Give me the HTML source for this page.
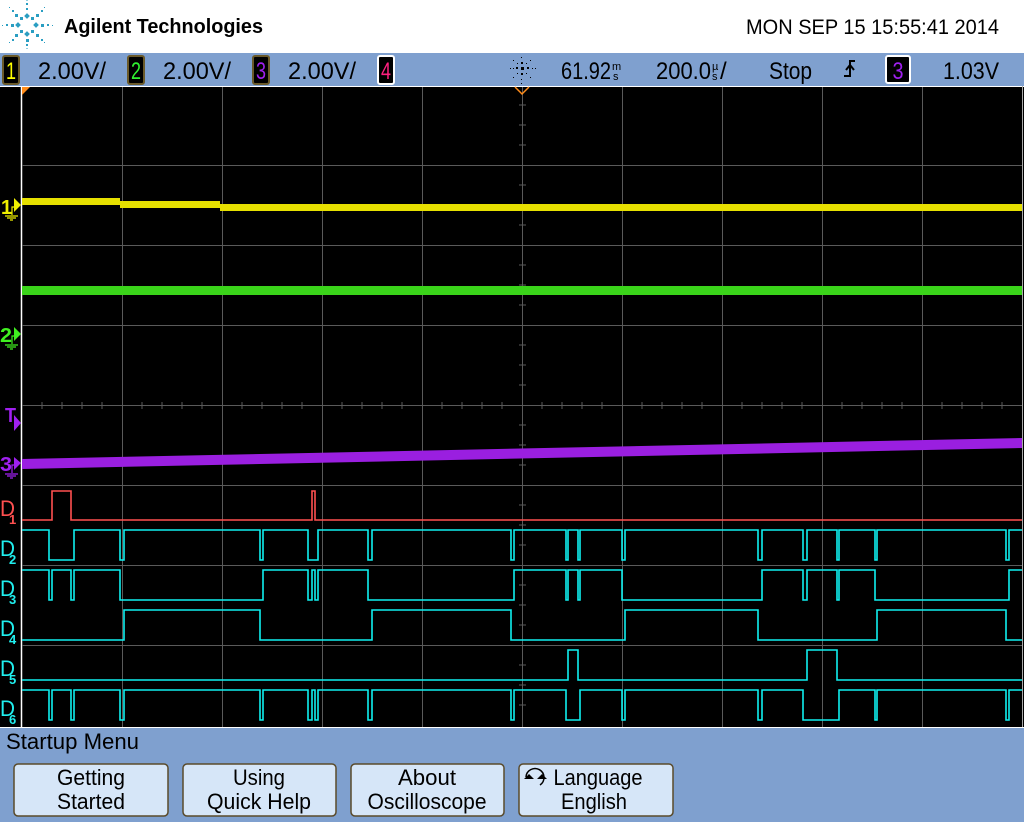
<!DOCTYPE html>
<html><head><meta charset="utf-8"><style>
html,body{margin:0;padding:0;width:1024px;height:822px;overflow:hidden;background:#fff;font-family:"Liberation Sans",sans-serif}
svg{display:block}
</style></head><body>
<svg width="1024" height="822" viewBox="0 0 1024 822" xmlns="http://www.w3.org/2000/svg" font-family="Liberation Sans, sans-serif">
<rect x="0" y="0" width="1024" height="53" fill="#fff"/>
<g fill="#2a9ec2">
<rect x="25" y="14" width="4" height="4" transform="rotate(45 27 16)"/>
<rect x="25" y="32" width="4" height="4" transform="rotate(45 27 34)"/>
<rect x="16" y="23" width="4" height="4" transform="rotate(45 18 25)"/>
<rect x="34" y="23" width="4" height="4" transform="rotate(45 36 25)"/>
<rect x="20" y="17" width="3" height="3"/><rect x="31" y="17" width="3" height="3"/>
<rect x="20" y="30" width="3" height="3"/><rect x="31" y="30" width="3" height="3"/>
<rect x="26" y="8" width="2" height="2"/><rect x="26" y="3" width="2" height="2"/><rect x="26.5" y="0" width="1" height="1"/>
<rect x="26" y="39" width="3" height="3"/><rect x="26" y="44" width="2" height="2"/><rect x="26.5" y="48" width="1" height="1"/>
<rect x="11" y="24" width="3" height="3"/><rect x="6" y="24" width="2" height="2"/><rect x="2" y="25" width="1" height="1"/>
<rect x="41" y="24" width="3" height="3"/><rect x="47" y="24" width="2" height="2"/><rect x="52" y="25" width="1" height="1"/>
<rect x="15" y="14" width="3" height="3"/><rect x="12" y="10" width="2" height="2"/><rect x="9" y="7" width="1" height="1"/>
<rect x="36" y="14" width="3" height="3"/><rect x="41" y="10" width="2" height="2"/><rect x="44" y="7" width="1" height="1"/>
<rect x="15" y="34" width="3" height="3"/><rect x="12" y="39" width="2" height="2"/><rect x="9" y="42" width="1" height="1"/>
<rect x="36" y="34" width="3" height="3"/><rect x="41" y="39" width="2" height="2"/><rect x="44" y="42" width="1" height="1"/>
</g>
<text x="64" y="33" font-size="20" font-weight="bold" fill="#000" textLength="199" lengthAdjust="spacingAndGlyphs">Agilent Technologies</text>
<text x="999" y="34" font-size="21" fill="#000" text-anchor="end" textLength="253" lengthAdjust="spacingAndGlyphs">MON SEP 15 15:55:41 2014</text>
<rect x="0" y="53" width="1024" height="33" fill="#7fa0cf"/>
<g font-size="24">
<rect x="3" y="56" width="16" height="28" rx="2" fill="#000" stroke="#6b5a2a" stroke-width="2"/>
<text x="11" y="79" fill="#ffff00" text-anchor="middle" textLength="10" lengthAdjust="spacingAndGlyphs">1</text>
<text x="38" y="79" fill="#000" textLength="68" lengthAdjust="spacingAndGlyphs">2.00V/</text>
<rect x="128" y="56" width="16" height="28" rx="2" fill="#000" stroke="#6b5a2a" stroke-width="2"/>
<text x="136" y="79" fill="#30f030" text-anchor="middle" textLength="10" lengthAdjust="spacingAndGlyphs">2</text>
<text x="163" y="79" fill="#000" textLength="68" lengthAdjust="spacingAndGlyphs">2.00V/</text>
<rect x="253" y="56" width="16" height="28" rx="2" fill="#000" stroke="#6b5a2a" stroke-width="2"/>
<text x="261" y="79" fill="#a020f0" text-anchor="middle" textLength="10" lengthAdjust="spacingAndGlyphs">3</text>
<text x="288" y="79" fill="#000" textLength="68" lengthAdjust="spacingAndGlyphs">2.00V/</text>
<rect x="378" y="56" width="16" height="28" rx="2" fill="#000" stroke="#fff" stroke-width="2"/>
<text x="386" y="79" fill="#ff2080" text-anchor="middle" textLength="10" lengthAdjust="spacingAndGlyphs">4</text>
<text x="561" y="79" fill="#000" textLength="50" lengthAdjust="spacingAndGlyphs">61.92</text>
<text x="612" y="70" fill="#000" font-size="11">m</text><text x="613" y="80" fill="#000" font-size="11">s</text>
<text x="656" y="79" fill="#000" textLength="55" lengthAdjust="spacingAndGlyphs">200.0</text>
<text x="712" y="70" fill="#000" font-size="11">µ</text><text x="712" y="80" fill="#000" font-size="11">s</text>
<text x="720" y="79" fill="#000">/</text>
<text x="769" y="79" fill="#000" textLength="43" lengthAdjust="spacingAndGlyphs">Stop</text>
<path d="M844 76 H850 V61 H855 M846 70 L850 65 L854 70" stroke="#000" stroke-width="2" fill="none"/>
<rect x="886" y="56" width="24" height="27" rx="2" fill="#000" stroke="#fff" stroke-width="2"/>
<text x="898" y="79" fill="#a020f0" text-anchor="middle" textLength="11" lengthAdjust="spacingAndGlyphs">3</text>
<text x="943" y="79" fill="#000" textLength="56" lengthAdjust="spacingAndGlyphs">1.03V</text>
</g>
<g fill="#000">
<rect x="521" y="67" width="3" height="3"/><rect x="516" y="67" width="2" height="2"/><rect x="527" y="67" width="2" height="2"/>
<rect x="521" y="62" width="2" height="2"/><rect x="521" y="73" width="2" height="2"/>
<rect x="510" y="68" width="1" height="1"/><rect x="513" y="68" width="1" height="1"/><rect x="532" y="68" width="1" height="1"/><rect x="535" y="68" width="1" height="1"/>
<rect x="521" y="57" width="1" height="1"/><rect x="521" y="79" width="1" height="1"/><rect x="521" y="83" width="1" height="1"/>
<rect x="517" y="63" width="1" height="1"/><rect x="526" y="63" width="1" height="1"/><rect x="517" y="73" width="1" height="1"/><rect x="526" y="73" width="1" height="1"/>
<rect x="513" y="60" width="1" height="1"/><rect x="530" y="60" width="1" height="1"/><rect x="513" y="77" width="1" height="1"/><rect x="530" y="77" width="1" height="1"/>
</g>
<rect x="0" y="86" width="1024" height="641" fill="#000"/>
<line x1="0" y1="86.5" x2="1024" y2="86.5" stroke="#fff" stroke-width="1"/>
<line x1="21.5" y1="86" x2="21.5" y2="727" stroke="#fff" stroke-width="1.5"/>
<g stroke="#5a5a5a" stroke-width="1">
<path d="M122.5 87V727M222.5 87V727M322.5 87V727M422.5 87V727M522.5 87V727M622.5 87V727M722.5 87V727M822.5 87V727M922.5 87V727M1022.5 87V727"/>
<path d="M22 165.5H1023M22 245.5H1023M22 325.5H1023M22 405.5H1023M22 485.5H1023M22 565.5H1023M22 645.5H1023"/>
<path d="M42 402V409M62 402V409M82 402V409M102 402V409M142 402V409M162 402V409M182 402V409M202 402V409M242 402V409M262 402V409M282 402V409M302 402V409M342 402V409M362 402V409M382 402V409M402 402V409M442 402V409M462 402V409M482 402V409M502 402V409M542 402V409M562 402V409M582 402V409M602 402V409M642 402V409M662 402V409M682 402V409M702 402V409M742 402V409M762 402V409M782 402V409M802 402V409M842 402V409M862 402V409M882 402V409M902 402V409M942 402V409M962 402V409M982 402V409M1002 402V409"/>
<path d="M519 105H526M519 125H526M519 145H526M519 185H526M519 205H526M519 225H526M519 265H526M519 285H526M519 305H526M519 345H526M519 365H526M519 385H526M519 425H526M519 445H526M519 465H526M519 505H526M519 525H526M519 545H526M519 585H526M519 605H526M519 625H526M519 665H526M519 685H526M519 705H526"/>
</g>
<line x1="1022.5" y1="86" x2="1022.5" y2="727" stroke="#aaa" stroke-width="1"/>
<path d="M22 87 L30 87 L22 95Z" fill="#ff8c1a"/>
<path d="M515 87 L522 94 L529 87" fill="none" stroke="#ff8c1a" stroke-width="1.5"/>
<rect x="22" y="198" width="98" height="7" fill="#e6e000"/>
<rect x="120" y="201" width="100" height="7" fill="#e6e000"/>
<rect x="220" y="204" width="802" height="7" fill="#e6e000"/>
<rect x="22" y="286" width="1000" height="9" fill="#3ad41a"/>
<polygon points="22,459 1022,438 1022,448 22,469" fill="#9a1fe0"/>
<g font-size="20" font-weight="bold">
<text x="1" y="214" fill="#f0f000" textLength="11" lengthAdjust="spacingAndGlyphs">1</text>
<path d="M14 198 L21 205 L14 212Z" fill="#f0f000"/>
<path d="M16 207 H12 V215 M5 216H18 M7 218H16 M10 220H13" stroke="#f0f000" stroke-width="1.2" fill="none"/>
<text x="0" y="342" fill="#40f020" textLength="12" lengthAdjust="spacingAndGlyphs">2</text>
<path d="M14 327 L21 334 L14 341Z" fill="#40f020"/>
<path d="M16 336 H12 V344 M5 345H18 M7 347H16 M10 349H13" stroke="#40f020" stroke-width="1.2" fill="none"/>
<text x="5" y="422" fill="#a020f0" textLength="11" lengthAdjust="spacingAndGlyphs">T</text>
<path d="M14 415 L21 423 L14 431Z" fill="#a020f0"/>
<text x="0" y="471" fill="#a020f0" textLength="12" lengthAdjust="spacingAndGlyphs">3</text>
<path d="M14 457 L21 463 L14 470Z" fill="#a020f0"/>
<path d="M16 465 H12 V473 M5 474H18 M7 476H16 M10 478H13" stroke="#a020f0" stroke-width="1.2" fill="none"/>
</g>
<g font-size="22">
<text x="0" y="516" fill="#ff5050" textLength="15" lengthAdjust="spacingAndGlyphs">D</text><text x="9" y="524" font-size="13" font-weight="bold" fill="#ff5050">1</text>
<text x="0" y="556" fill="#20f0f0" textLength="15" lengthAdjust="spacingAndGlyphs">D</text><text x="9" y="564" font-size="13" font-weight="bold" fill="#20f0f0">2</text>
<text x="0" y="596" fill="#20f0f0" textLength="15" lengthAdjust="spacingAndGlyphs">D</text><text x="9" y="604" font-size="13" font-weight="bold" fill="#20f0f0">3</text>
<text x="0" y="636" fill="#20f0f0" textLength="15" lengthAdjust="spacingAndGlyphs">D</text><text x="9" y="644" font-size="13" font-weight="bold" fill="#20f0f0">4</text>
<text x="0" y="676" fill="#20f0f0" textLength="15" lengthAdjust="spacingAndGlyphs">D</text><text x="9" y="684" font-size="13" font-weight="bold" fill="#20f0f0">5</text>
<text x="0" y="716" fill="#20f0f0" textLength="15" lengthAdjust="spacingAndGlyphs">D</text><text x="9" y="724" font-size="13" font-weight="bold" fill="#20f0f0">6</text>
</g>
<g fill="none" stroke-width="1.6">
<path stroke="#ff5050" d="M22 520 H52 V491 H71 V520 H312 V491 H315 V520 H1022"/>
<g stroke="#10f0f0">
<path d="M22 530 H49 V560 H74 V530 H120 V560 H124 V530 H260 V560 H263 V530 H308 V560 H318 V530 H368 V560 H372 V530 H511 V560 H514 V530 H566 V560 H568 V530 H578 V560 H580 V530 H622 V560 H625 V530 H758 V560 H762 V530 H803 V560 H807 V530 H837 V560 H839 V530 H875 V560 H877 V530 H1006 V560 H1009 V530 H1022"/>
<path d="M22 570 H49 V600 H52 V570 H71 V600 H74 V570 H120 V600 H263 V570 H308 V600 H312 V570 H315 V600 H318 V570 H368 V600 H514 V570 H566 V600 H568 V570 H578 V600 H580 V570 H622 V600 H762 V570 H803 V600 H807 V570 H837 V600 H839 V570 H875 V600 H1009 V570 H1022"/>
<path d="M22 640 H124 V610 H260 V640 H372 V610 H511 V640 H625 V610 H758 V640 H877 V610 H1006 V640 H1022"/>
<path d="M22 680 H568 V650 H578 V680 H807 V650 H837 V680 H1022"/>
<path d="M22 690 H49 V720 H52 V690 H71 V720 H74 V690 H120 V720 H124 V690 H260 V720 H263 V690 H308 V720 H312 V690 H315 V720 H318 V690 H368 V720 H372 V690 H511 V720 H514 V690 H566 V720 H580 V690 H622 V720 H625 V690 H758 V720 H762 V690 H803 V720 H839 V690 H875 V720 H877 V690 H1006 V720 H1009 V690 H1022"/>
</g>
</g>
<rect x="0" y="727" width="1024" height="95" fill="#7fa0cf"/>
<line x1="0" y1="727.5" x2="1024" y2="727.5" stroke="#fff"/>
<text x="6" y="749" font-size="22" fill="#000" textLength="133" lengthAdjust="spacingAndGlyphs">Startup Menu</text>
<g stroke="#5a4a2a" stroke-width="1.5" fill="#d6e6f8">
<rect x="14" y="764" width="154" height="52" rx="4"/>
<rect x="183" y="764" width="153" height="52" rx="4"/>
<rect x="351" y="764" width="153" height="52" rx="4"/>
<rect x="519" y="764" width="154" height="52" rx="4"/>
</g>
<g font-size="22" fill="#000" text-anchor="middle" lengthAdjust="spacingAndGlyphs">
<text x="91" y="785" textLength="68" lengthAdjust="spacingAndGlyphs">Getting</text><text x="91" y="809" textLength="68" lengthAdjust="spacingAndGlyphs">Started</text>
<text x="259" y="785" textLength="52" lengthAdjust="spacingAndGlyphs">Using</text><text x="259" y="809" textLength="104" lengthAdjust="spacingAndGlyphs">Quick Help</text>
<text x="427" y="785" textLength="58" lengthAdjust="spacingAndGlyphs">About</text><text x="427" y="809" textLength="119" lengthAdjust="spacingAndGlyphs">Oscilloscope</text>
<text x="598" y="785" textLength="89" lengthAdjust="spacingAndGlyphs">Language</text><text x="594" y="809" textLength="66" lengthAdjust="spacingAndGlyphs">English</text>
</g>
<g>
<path d="M526 777 A9 9 0 1 1 540 785" fill="none" stroke="#000" stroke-width="1.5"/>
<path d="M524 779 L529 774 L534 779Z M537 779 L542 774 L547 779Z" fill="#000"/>
</g>
</svg>
</body></html>
